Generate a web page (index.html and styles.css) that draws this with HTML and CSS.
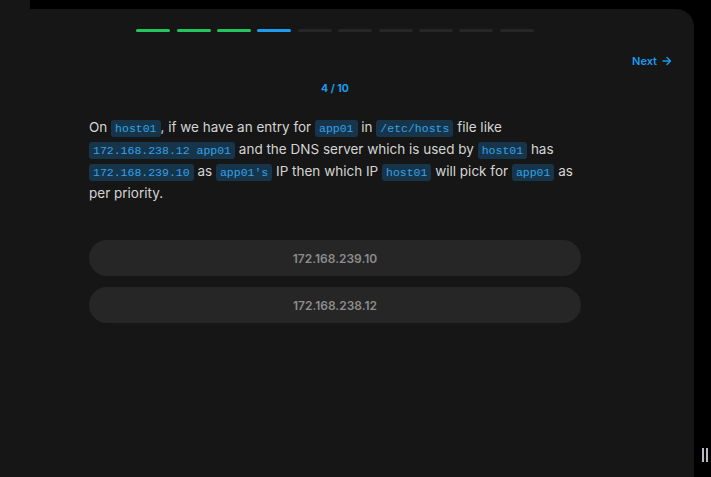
FILE: index.html
```html
<!DOCTYPE html>
<html>
<head>
<meta charset="utf-8">
<link rel="stylesheet" href="styles.css">
</head>
<body>
<div class="topstrip"><div class="stub"></div></div>
<div class="card">
  <div class="progress">
    <span class="bar done"></span><span class="bar done"></span><span class="bar done"></span><span class="bar current"></span><span class="bar"></span><span class="bar"></span><span class="bar"></span><span class="bar"></span><span class="bar"></span><span class="bar"></span>
  </div>
  <div class="navrow">
    <a class="next">Next <svg width="10" height="10" viewBox="0 0 10 10" class="arrow"><path d="M1 5h7.5M5 1.5L8.5 5 5 8.5" fill="none" stroke="currentColor" stroke-width="1.3" stroke-linecap="round" stroke-linejoin="round"/></svg></a>
  </div>
  <div class="counter">4 / 10</div>
  <div class="question">
    <p>On <code>host01</code>, if we have an entry for <code>app01</code> in <code>/etc/hosts</code> file like <code>172.168.238.12 app01</code> and the DNS server which is used by <code>host01</code> has <code>172.168.239.10</code> as <code>app01's</code> IP then which IP <code>host01</code> will pick for <code>app01</code> as per priority.</p>
    <div class="options">
      <button class="option">172.168.239.10</button>
      <button class="option">172.168.238.12</button>
    </div>
  </div>
</div>
<div class="handle"><span></span><span></span></div>
</body>
</html>
```
FILE: styles.css
```css
html, body { margin: 0; padding: 0; }
body {
  background: #000;
  width: 711px;
  height: 477px;
  overflow: hidden;
  font-family: Inter, "Noto Sans", sans-serif;
  position: relative;
}
.topstrip { height: 9px; display: flex; }
.stub { width: 30px; background: #161616; }
.card {
  width: 694px;
  height: 468px;
  box-sizing: border-box;
  background: #161616;
  border-top-right-radius: 18px;
  padding: 20px 54px 0 30px;
  display: flex;
  flex-direction: column;
  align-items: center;
}
.progress { display: flex; gap: 6.4px; height: 3px; }
.bar { width: 34px; height: 3px; border-radius: 2px; background: #262626; }
.bar.done { background: #22c55e; }
.bar.current { background: #1d9bf0; }
.navrow {
  align-self: stretch;
  display: flex;
  justify-content: flex-end;
  margin-right: -32px;
  margin-top: 22px;
  height: 14px;
}
.next {
  color: #1d9bf0;
  font-size: 11px;
  font-weight: 600;
  line-height: 14px;
  display: flex;
  align-items: center;
  gap: 5px;
}
.arrow { display: block; }
.counter {
  margin-top: 14px;
  color: #1d9bf0;
  font-size: 10.5px;
  font-weight: 700;
  line-height: 14px;
}
.question { width: 492px; margin-top: 20px; }
.question p {
  margin: 0;
  color: #d4d4d4;
  font-size: 13.5px;
  line-height: 22px;
}
code {
  display: inline-block;
  font-family: "Liberation Mono", "DejaVu Sans Mono", monospace;
  font-size: 11.5px;
  line-height: 17px;
  background: #17354a;
  color: #34a2e8;
  padding: 0 4px;
  border-radius: 3px;
}
.options { margin-top: 36px; display: flex; flex-direction: column; gap: 11px; }
.option {
  border: 0;
  height: 36px;
  border-radius: 18px;
  background: #262626;
  color: #8c8c8c;
  font-family: Inter, "Noto Sans", sans-serif;
  font-size: 12px;
  font-weight: 600;
}
.handle {
  position: absolute;
  left: 702px;
  top: 448px;
  display: flex;
  gap: 2px;
}
.handle span { width: 2px; height: 14px; background: #b8b8c0; }
```
